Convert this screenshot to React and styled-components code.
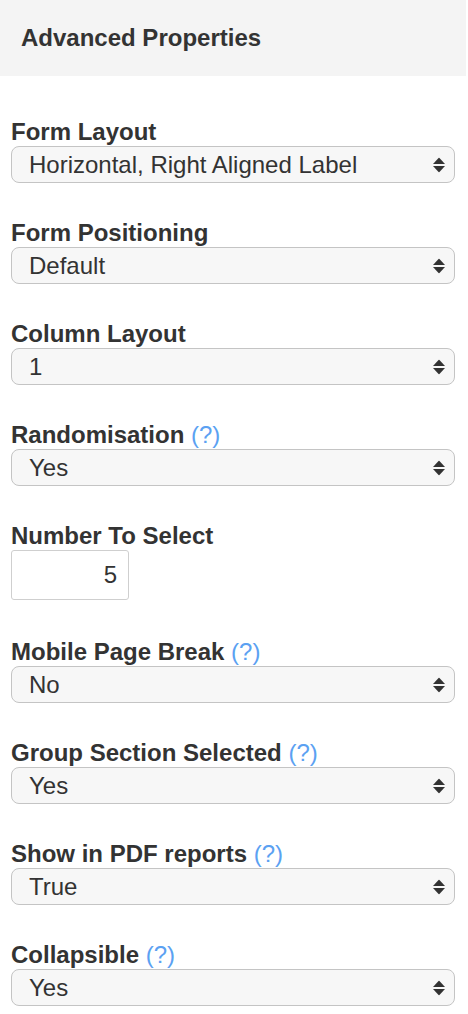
import React from "react";
import styled, { createGlobalStyle } from "styled-components";

const fields = [
  { label: "Form Layout", value: "Horizontal, Right Aligned Label" },
  { label: "Form Positioning", value: "Default" },
  { label: "Column Layout", value: "1" },
  { label: "Randomisation", value: "Yes", help: true },
  { label: "Number To Select", value: "5", input: true },
  { label: "Mobile Page Break", value: "No", help: true },
  { label: "Group Section Selected", value: "Yes", help: true },
  { label: "Show in PDF reports", value: "True", help: true },
  { label: "Collapsible", value: "Yes", help: true },
];

const App = () => {
  return (
    <>
      <GlobalStyle />
      <Panel>
        <Header>
          <Title>Advanced Properties</Title>
        </Header>
        <Form>
          {fields.map((f) => (
            <Group key={f.label} $input={f.input}>
              <Label>
                {f.label}
                {f.help && <Help> (?)</Help>}
              </Label>
              {f.input ? (
                <NumberInput type="text" defaultValue={f.value} />
              ) : (
                <SelectWrap>
                  <Select defaultValue={f.value}>
                    <option value={f.value}>{f.value}</option>
                  </Select>
                  <Arrows width="12" height="15" viewBox="0 0 12 15">
                    <path d="M6 0 L12 6.5 L0 6.5 Z" fill="#333" />
                    <path d="M0 8.5 L12 8.5 L6 15 Z" fill="#333" />
                  </Arrows>
                </SelectWrap>
              )}
            </Group>
          ))}
        </Form>
      </Panel>
    </>
  );
};

export default App;

const GlobalStyle = createGlobalStyle`
  body {
    margin: 0;
    background: #fff;
    font-family: "Liberation Sans", Arial, sans-serif;
    color: #333;
  }
`;

const Panel = styled.div`
  width: 468px;
`;

const Header = styled.div`
  width: 466px;
  height: 76px;
  background: #f4f4f4;
  display: flex;
  align-items: center;
  padding-left: 21px;
  box-sizing: border-box;
`;

const Title = styled.h3`
  margin: 0;
  font-size: 24px;
  font-weight: bold;
  color: #333;
`;

const Form = styled.div`
  padding: 42px 13px 0 11px;
  display: flex;
  flex-direction: column;
`;

const Group = styled.div`
  display: flex;
  flex-direction: column;
  gap: ${(p) => (p.$input ? "1px" : "1px")};
  margin-bottom: ${(p) => (p.$input ? "38px" : "36px")};
`;

const Label = styled.label`
  font-size: 24px;
  line-height: 27px;
  font-weight: bold;
  color: #333;
`;

const Help = styled.span`
  font-weight: normal;
  color: #5ba1f2;
`;

const SelectWrap = styled.div`
  position: relative;
  width: 444px;
`;

const Select = styled.select`
  appearance: none;
  -webkit-appearance: none;
  width: 100%;
  height: 37px;
  box-sizing: border-box;
  border: 1.5px solid #c4c4c4;
  border-radius: 8px;
  background: #f7f7f7;
  font-family: "Liberation Sans", Arial, sans-serif;
  font-size: 24px;
  color: #333;
  padding: 0 40px 0 17px;
  outline: none;
`;

const Arrows = styled.svg`
  position: absolute;
  right: 10px;
  top: 50%;
  transform: translateY(-50%);
  pointer-events: none;
`;

const NumberInput = styled.input`
  width: 118px;
  height: 50px;
  box-sizing: border-box;
  border: 1.5px solid #cfcfcf;
  border-radius: 3px;
  background: #fff;
  font-family: "Liberation Sans", Arial, sans-serif;
  font-size: 24px;
  color: #333;
  text-align: right;
  padding: 0 11px;
  outline: none;
`;
